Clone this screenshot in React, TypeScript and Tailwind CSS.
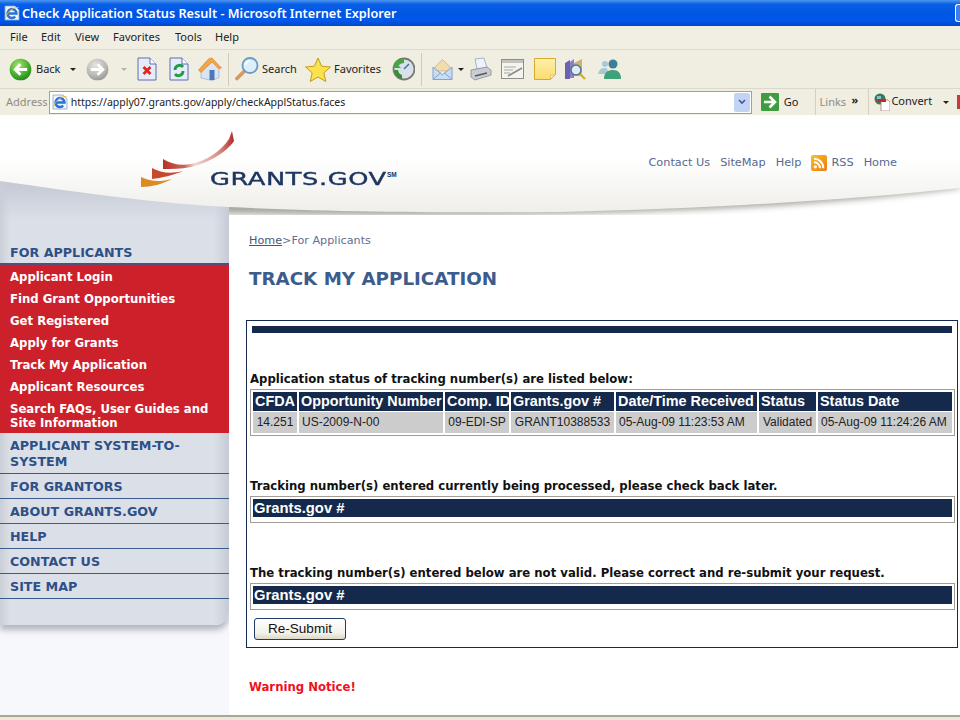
import * as React from "react";

const SYS = "font-['Noto_Sans','Open_Sans',sans-serif]";
const VERDANA = "font-['DejaVu_Sans','Noto_Sans',sans-serif]";
const ARIAL = "font-['Liberation_Sans',Arial,sans-serif]";

const MENU = [
  { label: "File", w: "w-[31px]" },
  { label: "Edit", w: "w-[34px]" },
  { label: "View", w: "w-[38px]" },
  { label: "Favorites", w: "w-[62px]" },
  { label: "Tools", w: "w-[40px]" },
  { label: "Help", w: "w-[30px]" },
];

const APPLICANT_LINKS = [
  "Applicant Login",
  "Find Grant Opportunities",
  "Get Registered",
  "Apply for Grants",
  "Track My Application",
  "Applicant Resources",
];

const SIDE_LINKS = ["FOR GRANTORS", "ABOUT GRANTS.GOV", "HELP", "CONTACT US", "SITE MAP"];

const COLUMNS = [
  { head: "CFDA", cell: "14.251", w: "w-[44px]", center: true },
  { head: "Opportunity Number", cell: "US-2009-N-00", w: "w-[144px]" },
  { head: "Comp. ID", cell: "09-EDI-SP", w: "w-[64px]", center: true },
  { head: "Grants.gov #", cell: "GRANT10388533", w: "w-[103px]", center: true },
  { head: "Date/Time Received", cell: "05-Aug-09 11:23:53 AM", w: "w-[141px]" },
  { head: "Status", cell: "Validated", w: "w-[57px]", center: true },
  { head: "Status Date", cell: "05-Aug-09 11:24:26 AM", w: "w-[134px]" },
];

function Caret({ className }: { className?: string }) {
  return <span className={`h-0 w-0 shrink-0 border-x-[3px] border-t-[3px] border-x-transparent ${className}`} />;
}

function RoundArrow({ grey, className }: { grey?: boolean; className?: string }) {
  const id = grey ? "fwd" : "back";
  return (
    <svg viewBox="0 0 24 24" className={`h-[23px] w-[23px] shrink-0 ${className}`}>
      <defs>
        <radialGradient id={id} cx="40%" cy="30%" r="80%">
          <stop offset="0" stopColor={grey ? "#e4e4e0" : "#a6e36e"} />
          <stop offset="0.6" stopColor={grey ? "#b8b8b4" : "#45ad2c"} />
          <stop offset="1" stopColor={grey ? "#8f8f8c" : "#1a7d1a"} />
        </radialGradient>
      </defs>
      <circle cx="12" cy="12" r="11.3" fill={`url(#${id})`} />
      {grey ? (
        <path d="M5 12h12M12 6.5l5.5 5.5-5.5 5.5" fill="none" stroke="#fff" strokeWidth="3" />
      ) : (
        <path d="M19 12H7M12 6.5L6.5 12l5.5 5.5" fill="none" stroke="#fff" strokeWidth="3" />
      )}
    </svg>
  );
}

function DocIcon({ children, className }: { children: React.ReactNode; className?: string }) {
  return (
    <svg viewBox="0 0 20 24" className={`h-[24px] w-[20px] shrink-0 ${className}`}>
      <path d="M1 1h12l6 6v16H1z" fill="#e6ecfa" stroke="#5a6fb4" />
      <path d="M13 1v6h6" fill="#fff" stroke="#5a6fb4" />
      {children}
    </svg>
  );
}

function HomeIcon({ className }: { className?: string }) {
  return (
    <svg viewBox="0 0 24 24" className={`h-[24px] w-[24px] shrink-0 ${className}`}>
      <path d="M3 12v9l11 2.500 7-3V10L15 4z" fill="#dbe4f2" stroke="#8fa3c4" strokeWidth="0.6" />
      <path d="M0.5 13L11 1.500l3-.5 7.500 8 2 2-3 .5L14 5 3 15.500z" fill="#f2a646" stroke="#d47a22" strokeWidth="0.6" />
      <rect x="11.500" y="13" width="5" height="10" fill="#4a78b8" />
    </svg>
  );
}

function SearchIcon({ className }: { className?: string }) {
  return (
    <svg viewBox="0 0 24 24" className={`h-[24px] w-[24px] shrink-0 ${className}`}>
      <path d="M9 14.500L2 21.500" stroke="#d39a62" strokeWidth="3.800" strokeLinecap="round" />
      <circle cx="15" cy="8.500" r="7.500" fill="#dcf0fc" stroke="#6a9bc8" strokeWidth="1.800" />
      <path d="M10.500 8a4.500 4.500 0 0 1 4-4" fill="none" stroke="#fff" strokeWidth="1.500" />
    </svg>
  );
}

function StarIcon({ className }: { className?: string }) {
  return (
    <svg viewBox="0 0 26 25" className={`h-[25px] w-[26px] shrink-0 ${className}`}>
      <path
        d="M13 1l3.600 8.200 8.900.8-6.700 5.900 2 8.600L13 20l-7.800 4.500 2-8.600L.5 10l8.900-.8z"
        fill="#fde24f"
        stroke="#c79a18"
      />
    </svg>
  );
}

function HistoryIcon({ className }: { className?: string }) {
  return (
    <svg viewBox="0 0 24 24" className={`h-[24px] w-[24px] shrink-0 ${className}`}>
      <circle cx="13" cy="12" r="10.500" fill="#d8e0ea" stroke="#777b72" strokeWidth="1.800" />
      <path d="M13 12l5-5" stroke="#3d6fa8" strokeWidth="1.500" />
      <path d="M4 5a11 11 0 0 1 9-3v4a7 7 0 0 0-5.500 2.500L10 11H3z" fill="#43a83c" />
      <path d="M3 13a10 10 0 0 0 8 9v-4a6 6 0 0 1-4-5z" fill="#358f32" />
    </svg>
  );
}

function MailIcon({ className }: { className?: string }) {
  return (
    <svg viewBox="0 0 22 24" className={`h-[24px] w-[21px] shrink-0 ${className}`}>
      <path d="M3 10L11 2l8 8v4H3z" fill="#f2dcae" stroke="#c9a873" strokeWidth="0.7" />
      <path d="M1 10l10 8 10-8v13H1z" fill="#c7dcf5" stroke="#7da0cc" />
      <path d="M1 23l8-7M21 23l-8-7" stroke="#7da0cc" fill="none" />
    </svg>
  );
}

function PrinterIcon({ className }: { className?: string }) {
  return (
    <svg viewBox="0 0 22 24" className={`h-[24px] w-[22px] shrink-0 ${className}`}>
      <path d="M5 2l9-1 3 10-10 1z" fill="#eef3fb" stroke="#8a9ab4" strokeWidth="0.7" />
      <path d="M1 13l16-3 4 3v5L5 23l-4-3z" fill="#c9ccd2" stroke="#7d8088" strokeWidth="0.7" />
      <path d="M5 19l12-3" stroke="#55585e" strokeWidth="1.400" />
    </svg>
  );
}

function EditIcon({ className }: { className?: string }) {
  return (
    <svg viewBox="0 0 23 20" className={`h-[20px] w-[23px] shrink-0 ${className}`}>
      <rect x="0.5" y="0.5" width="22" height="19" fill="#f4f3ee" stroke="#8e8e88" />
      <rect x="1" y="1" width="21" height="3" fill="#c4c4be" />
      <path d="M3 8h12M3 11h9M3 14h6" stroke="#a8a8a2" />
      <path d="M7 17l14-8" stroke="#8a8a86" strokeWidth="1.600" />
    </svg>
  );
}

function NoteIcon({ className }: { className?: string }) {
  return (
    <svg viewBox="0 0 22 22" className={`h-[22px] w-[22px] shrink-0 ${className}`}>
      <defs>
        <linearGradient id="note" x1="0" y1="0" x2="0" y2="1">
          <stop offset="0" stopColor="#fdf0a8" />
          <stop offset="1" stopColor="#fbdc70" />
        </linearGradient>
      </defs>
      <path d="M0.5 0.5h21v16l-5 5h-16z" fill="url(#note)" stroke="#d8a830" />
      <path d="M21 17h-4.500v4z" fill="#fff6c8" stroke="#d8a830" strokeWidth="0.6" />
    </svg>
  );
}

function ResearchIcon({ className }: { className?: string }) {
  return (
    <svg viewBox="0 0 23 22" className={`h-[22px] w-[23px] shrink-0 ${className}`}>
      <path d="M1 5l5-3v19H1z" fill="#6a62b0" />
      <path d="M6 4l4-3v19H6z" fill="#8a80c8" />
      <path d="M10 5l8-4v17h-8z" fill="#c8b678" />
      <path d="M15 15l6 6" stroke="#d8b020" strokeWidth="2.400" />
      <circle cx="12" cy="12" r="5" fill="#dcecf8" stroke="#5a7088" strokeWidth="1.400" />
    </svg>
  );
}

function MessengerIcon({ className }: { className?: string }) {
  return (
    <svg viewBox="0 0 24 22" className={`h-[22px] w-[24px] shrink-0 ${className}`}>
      <circle cx="8" cy="6" r="3" fill="#a8c8d8" />
      <path d="M1 16c1-5 4-6 7-6s3 3 3 6z" fill="#a8c8d8" />
      <circle cx="16" cy="6" r="4.500" fill="#3d7f96" />
      <path d="M7 21c0-7 4-9 9-9s8 3 8 9z" fill="#3fa07a" />
    </svg>
  );
}

function IeIcon({ className }: { className?: string }) {
  return (
    <svg viewBox="0 0 16 16" className={`h-4 w-4 shrink-0 ${className}`}>
      <path d="M1 1h10l4 4v10H1z" fill="#eef3fb" stroke="#8ea3ba" strokeWidth="0.8" />
      <path d="M4 8.500h8.500a4.500 4.500 0 1 0-1.300 3.200" fill="none" stroke="#2b72d6" strokeWidth="2.400" />
      <path d="M1.500 13C3.500 6 9.500 2 14.500 2.500" fill="none" stroke="#e6b93a" strokeWidth="0.9" />
    </svg>
  );
}

function GoIcon({ className }: { className?: string }) {
  return (
    <svg viewBox="0 0 18 18" className={`h-[18px] w-[18px] shrink-0 ${className}`}>
      <rect width="18" height="18" rx="1" fill="#3f9c3f" />
      <path d="M3 9h10M8.500 3.500L14 9l-5.500 5.500" fill="none" stroke="#fff" strokeWidth="2.600" />
    </svg>
  );
}

function ConvertIcon({ className }: { className?: string }) {
  return (
    <svg viewBox="0 0 16 18" className={`h-[18px] w-4 shrink-0 ${className}`}>
      <circle cx="6" cy="6" r="5.500" fill="#3b7a4e" />
      <path d="M3 3h4v3H3z" fill="#7cc2d8" />
      <path d="M7 7h7l2 2v9H7z" fill="#fff" stroke="#b0807a" strokeWidth="0.8" />
      <rect x="4" y="6" width="8" height="3" fill="#d81e2a" />
    </svg>
  );
}

function RssIcon({ className }: { className?: string }) {
  return (
    <svg viewBox="0 0 16 16" className={`h-4 w-4 shrink-0 ${className}`}>
      <defs>
        <linearGradient id="rss" x1="0" y1="0" x2="1" y2="1">
          <stop offset="0" stopColor="#fbbf24" />
          <stop offset="1" stopColor="#ee7a12" />
        </linearGradient>
      </defs>
      <rect width="16" height="16" rx="2" fill="url(#rss)" />
      <circle cx="4.300" cy="11.800" r="1.600" fill="#fff" />
      <path d="M3 7.200a6 6 0 0 1 6 6M3 3.800a9.400 9.400 0 0 1 9.400 9.400" fill="none" stroke="#fff" strokeWidth="2" />
    </svg>
  );
}

function Swoosh({ className }: { className?: string }) {
  return (
    <svg viewBox="0 0 95 58" className={`h-[58px] w-[95px] shrink-0 ${className}`}>
      <defs>
        <linearGradient id="sw" x1="0" y1="0" x2="1" y2="0">
          <stop offset="0" stopColor="#b5332a" />
          <stop offset="0.300" stopColor="#c8655a" />
          <stop offset="0.450" stopColor="#ecdcd6" />
          <stop offset="0.800" stopColor="#d88a80" />
          <stop offset="1" stopColor="#b02a2a" />
        </linearGradient>
      </defs>
      <path d="M22 28C30 33 40 35 50 33 65 30 80 20 88 8L91 0l2 10C85 22 65 33 50 36 40 38 30 38 22 38z" fill="url(#sw)" />
      <path d="M11 37C20 42 30 43 42 40 33 44 20 47 11 48z" fill="#c5482f" />
      <path d="M0 46C10 51 20 51 31 48 22 53 10 56 0 56z" fill="#de8a22" />
    </svg>
  );
}

function HeaderCurve() {
  return (
    <svg viewBox="0 0 960 105" preserveAspectRatio="none" className="absolute inset-0 h-[105px] w-[960px]">
      <defs>
        <linearGradient id="hdr" x1="0" y1="0" x2="0" y2="1">
          <stop offset="0" stopColor="#ffffff" />
          <stop offset="0.450" stopColor="#ffffff" />
          <stop offset="1" stopColor="#efeeea" />
        </linearGradient>
        <linearGradient id="side" x1="0" y1="0" x2="0" y2="1">
          <stop offset="0" stopColor="#bfc4cf" />
          <stop offset="1" stopColor="#dbe0e8" />
        </linearGradient>
        <linearGradient id="edge" x1="0" y1="0" x2="1" y2="0">
          <stop offset="0" stopColor="#c5cad4" stopOpacity="0" />
          <stop offset="1" stopColor="#c5cad4" />
        </linearGradient>
        <linearGradient id="edgeL" x1="0" y1="0" x2="1" y2="0">
          <stop offset="0" stopColor="#c9ced7" />
          <stop offset="1" stopColor="#c9ced7" stopOpacity="0" />
        </linearGradient>
        <filter id="blur" x="-5%" y="-20%" width="110%" height="150%">
          <feGaussianBlur stdDeviation="3" />
        </filter>
      </defs>
      <rect x="229" y="60" width="731" height="45" fill="#ffffff" />
      <path d="M190 98C400 102 560 100 660 96 780 92 880 84 960 73v-5L190 88z" fill="#a8a6a0" filter="url(#blur)" />
      <rect x="0" y="60" width="229" height="45" fill="url(#side)" />
      <rect x="214" y="60" width="15" height="45" fill="url(#edge)" />
      <rect x="0" y="60" width="10" height="45" fill="url(#edgeL)" />
      <path d="M0 66C70 76 150 88 229 92 330 97 470 98 560 97 700 94 850 85 960 73V0H0z" fill="url(#hdr)" />
    </svg>
  );
}

function MenuBar() {
  return (
    <div className={`flex h-[23px] items-center bg-[#f1eee3] pl-[10px] text-[11px] text-[#222] ${SYS}`}>
      {MENU.map((m) => (
        <span key={m.label} className={m.w}>{m.label}</span>
      ))}
    </div>
  );
}

function Toolbar() {
  return (
    <div className={`flex h-[39px] items-center border-t border-[#dcd8ca] bg-[#f0ede1] text-[11px] text-[#222] ${SYS}`}>
      <RoundArrow className="ml-[9px]" />
      <span className="ml-[4px] w-[23px]">Back</span>
      <Caret className="ml-[11px] border-t-[#222]" />
      <RoundArrow grey className="ml-[10px]" />
      <Caret className="ml-[12px] border-t-[#b4b4ac]" />
      <DocIcon className="ml-[10px]">
        <path d="M6.500 10l7 7M13.500 10l-7 7" stroke="#e0281e" strokeWidth="2.800" />
      </DocIcon>
      <DocIcon className="ml-[12px]">
        <path d="M6 13a4.500 4.500 0 0 1 8-3M14 14a4.500 4.500 0 0 1-8 3" fill="none" stroke="#1f9d46" strokeWidth="2.800" />
      </DocIcon>
      <HomeIcon className="ml-[9px]" />
      <span className="ml-[6px] h-[33px] w-px bg-[#cfcbbb]" />
      <SearchIcon className="ml-[6px]" />
      <span className="ml-[3px] w-[33px]">Search</span>
      <StarIcon className="ml-[10px]" />
      <span className="ml-[3px] w-[46px]">Favorites</span>
      <HistoryIcon className="ml-[11px]" />
      <span className="ml-[6px] h-[33px] w-px bg-[#cfcbbb]" />
      <MailIcon className="ml-[10px]" />
      <Caret className="ml-[5px] border-t-[#222]" />
      <PrinterIcon className="ml-[6px]" />
      <EditIcon className="ml-[9px]" />
      <NoteIcon className="ml-[10px]" />
      <ResearchIcon className="ml-[8px]" />
      <MessengerIcon className="ml-[10px]" />
    </div>
  );
}

function AddressBar() {
  return (
    <div className={`flex h-[27px] items-center border-t border-[#dcd8ca] bg-[#f0ede1] text-[11px] ${SYS}`}>
      <span className="ml-[6px] w-[43px] text-[#8d8c84]">Address</span>
      <div className="flex h-[23px] w-[708px] items-center border border-[#8ea3ba] bg-white pl-[2px] pr-[1px]">
        <IeIcon />
        <span className="ml-[3px] flex-1 pt-[1px] text-[10.500px] text-[#222]">https://apply07.grants.gov/apply/checkApplStatus.faces</span>
        <span className="flex h-[19px] w-[16px] items-center justify-center rounded-[2px] bg-[#c3d3f5]">
          <svg viewBox="0 0 8 6" className="h-[6px] w-2">
            <path d="M1 1l3 3 3-3" fill="none" stroke="#3c5a9c" strokeWidth="1.600" />
          </svg>
        </span>
      </div>
      <GoIcon className="ml-[9px]" />
      <span className="ml-[5px] w-[31px] text-[#222]">Go</span>
      <span className="h-[26px] w-px bg-[#d5d1c2]" />
      <span className="ml-[4px] w-[26px] text-[#8d8c84]">Links</span>
      <span className="mb-[6px] ml-[6px] w-[17px] text-[11px] font-bold leading-none text-[#222]">»</span>
      <span className="h-[26px] w-px bg-[#d5d1c2]" />
      <ConvertIcon className="ml-[5px]" />
      <span className="mb-[2px] ml-[1px] w-[52px] text-[#222]">Convert</span>
      <Caret className="border-t-[#222]" />
      <span className="ml-[8px] h-[14px] w-[3px] bg-[#c83a3a]" />
    </div>
  );
}

function Sidebar() {
  return (
    <aside className={`w-[229px] shrink-0 ${VERDANA}`}>
      <div className="rounded-br-[14px] bg-[linear-gradient(90deg,#c9ced7_0px,#dbe0e8_10px,#dbe0e8_214px,#c5cad4_229px)] pt-[25px] pb-[26px] shadow-[0_5px_6px_rgba(120,125,140,0.55)]">
        <div className="flex h-[25px] items-center border-b-2 border-[#5a4a74] pl-[10px] pt-[3px] text-[12.700px] font-bold text-[#2f4f86]">
          FOR APPLICANTS
        </div>
        <div className="bg-[#cc212b] pl-[10px] pb-[3px] text-[11.700px] font-bold text-white">
          {APPLICANT_LINKS.map((l) => (
            <div key={l} className="flex h-[22px] items-center pt-[3px]">{l}</div>
          ))}
          <div className="pt-[5px] leading-[14px]">
            Search FAQs, User Guides and
            <br />
            Site Information
          </div>
        </div>
        <div className="border-b border-[#3b5a8e] pl-[10px] pt-[5px] pb-[3px] text-[12.700px] font-bold leading-[16px] text-[#2f4f86]">
          APPLICANT SYSTEM-TO-
          <br />
          SYSTEM
        </div>
        {SIDE_LINKS.map((l) => (
          <div key={l} className="flex h-[25px] items-center border-b border-[#3b5a8e] pl-[10px] pt-[2px] text-[12.700px] font-bold text-[#2f4f86]">
            {l}
          </div>
        ))}
      </div>
    </aside>
  );
}

function ResultTable() {
  return (
    <div className={`ml-[3px] mr-[2px] border border-[#a09c98] py-[1px] ${ARIAL}`}>
      <table className="w-full table-fixed border-separate border-spacing-x-[2px] border-spacing-y-[1px]">
        <thead>
          <tr>
            {COLUMNS.map((c) => (
              <th key={c.head} className={`${c.w} h-[19px] whitespace-nowrap bg-[#14294b] pb-[1px] pl-[2px] text-left text-[14.400px] font-bold leading-[17px] text-white`}>
                {c.head}
              </th>
            ))}
          </tr>
        </thead>
        <tbody>
          <tr>
            {COLUMNS.map((c) => (
              <td key={c.head} className={`h-[21px] whitespace-nowrap bg-[#cccccc] pb-[1px] text-[12px] leading-[19px] text-[#222] ${c.center ? "text-center" : "pl-[3px]"}`}>
                {c.cell}
              </td>
            ))}
          </tr>
        </tbody>
      </table>
    </div>
  );
}

function EmptyTable() {
  return (
    <div className={`ml-[3px] mr-[2px] border border-[#a09c98] px-[2px] pt-[2px] pb-[5px] ${ARIAL}`}>
      <div className="flex h-[18px] items-center bg-[#14294b] pl-[1px] text-[14.800px] font-bold text-white">Grants.gov #</div>
    </div>
  );
}

function Heading({ children }: { children: React.ReactNode }) {
  return <p className={`ml-[3px] whitespace-nowrap text-[11.700px] font-bold leading-[16px] text-[#111] ${VERDANA}`}>{children}</p>;
}

function StatusPanel() {
  return (
    <div className="ml-[-3px] mt-[30px] h-[328px] w-[712px] border border-[#14294b] pt-[5px]">
      <div className="mx-[5px] h-[7px] bg-[#14294b]" />
      <div className="mt-[38px]"><Heading>Application status of tracking number(s) are listed below:</Heading></div>
      <div className="mt-[2px]"><ResultTable /></div>
      <div className="mt-[42px]"><Heading>Tracking number(s) entered currently being processed, please check back later.</Heading></div>
      <div className="mt-[2px]"><EmptyTable /></div>
      <div className="mt-[42px]"><Heading>The tracking number(s) entered below are not valid. Please correct and re-submit your request.</Heading></div>
      <div className="mt-[2px]"><EmptyTable /></div>
      <button className={`ml-[7px] mt-[8px] h-[22px] w-[92px] rounded-[3px] border border-[#1e3c64] bg-[linear-gradient(180deg,#ffffff,#f3f1ea_70%,#dcd8c8)] text-[13.500px] text-[#111] ${ARIAL}`}>
        Re-Submit
      </button>
    </div>
  );
}

export default function App() {
  return (
    <div className="flex h-[720px] w-[960px] flex-col overflow-hidden bg-white">
      <div className={`flex h-[26px] items-center justify-between bg-[linear-gradient(180deg,#4d97ee_0%,#0a5fe6_16%,#0054e3_55%,#0058ea_80%,#0048c8_100%)] text-[12.700px] font-semibold text-white ${SYS}`}>
        <div className="flex items-center">
          <IeIcon className="ml-[4px]" />
          <span className="ml-[2px] pt-[1px]">Check Application Status Result - Microsoft Internet Explorer</span>
        </div>
        <span className="h-[18px] w-[5px] rounded-l-[3px] border border-r-0 border-white bg-[#3c7ff0]" />
      </div>
      <MenuBar />
      <Toolbar />
      <AddressBar />

      <div className="relative flex min-h-0 flex-1 flex-col bg-[#f7f8fb]">
        <HeaderCurve />
        <header className="relative z-10 flex h-[100px] shrink-0 items-start">
          <div className="ml-[141px] mt-[16px] flex items-end">
            <Swoosh />
            <span className={`mb-[1px] ml-[-26px] inline-block w-[177px] origin-left scale-x-[1.39] whitespace-nowrap text-[18.500px] font-normal leading-none tracking-[0.4px] text-[#1e3560] [-webkit-text-stroke:0.4px_#1e3560] ${VERDANA}`}>
              GRANTS.GOV
            </span>
            <span className={`mb-[11px] text-[6.500px] font-bold leading-none text-[#1e3560] ${ARIAL}`}>SM</span>
          </div>
          <nav className={`ml-auto mr-[63px] mt-[40px] flex items-center text-[11.300px] text-[#566a90] ${VERDANA}`}>
            <span>Contact Us</span>
            <span className="ml-[10px]">SiteMap</span>
            <span className="ml-[10px]">Help</span>
            <RssIcon className="ml-[10px]" />
            <span className="ml-[4px]">RSS</span>
            <span className="ml-[10px]">Home</span>
          </nav>
        </header>

        <div className="flex min-h-0 flex-1">
          <Sidebar />
          <main className={`relative flex-1 bg-white pl-[20px] ${VERDANA}`}>
            <p className="mt-[19px] text-[11.200px] leading-[14px] text-[#5f7090]">
              <span className="text-[#44587e] underline">Home</span>&gt;For Applicants
            </p>
            <h1 className="mt-[20px] text-[18.300px] font-bold leading-[22px] text-[#3d5c8e]">TRACK MY APPLICATION</h1>
            <StatusPanel />
            <p className="mt-[31px] text-[11.700px] font-bold leading-[16px] text-[#ee1122]">Warning Notice!</p>
          </main>
        </div>
      </div>

      <div className="h-[5px] shrink-0 border-t-2 border-[#a8a898] bg-[#ece9d8]" />
    </div>
  );
}
